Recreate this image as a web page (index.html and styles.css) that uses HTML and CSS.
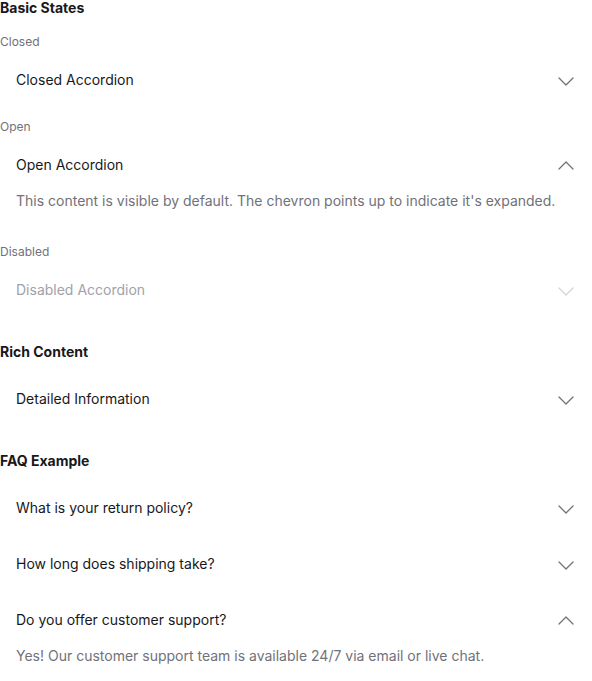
FILE: index.html
```html
<!DOCTYPE html>
<html lang="en">
<head>
<meta charset="utf-8">
<link rel="stylesheet" href="styles.css">
</head>
<body>
<main class="page">
  <section class="section">
    <h3 class="section-title">Basic States</h3>
    <div class="blocks">
      <div class="block">
        <div class="label">Closed</div>
        <div class="accordion">
          <button class="trigger"><span>Closed Accordion</span>
            <svg class="chev" viewBox="0 0 20 20"><path d="M3 8 L10 15 L17 8"/></svg></button>
        </div>
      </div>
      <div class="block">
        <div class="label">Open</div>
        <div class="accordion">
          <button class="trigger"><span>Open Accordion</span>
            <svg class="chev" viewBox="0 0 20 20"><path d="M3 14 L10 7 L17 14"/></svg></button>
          <div class="content">This content is visible by default. The chevron points up to indicate it's expanded.</div>
        </div>
      </div>
      <div class="block">
        <div class="label">Disabled</div>
        <div class="accordion disabled">
          <button class="trigger"><span>Disabled Accordion</span>
            <svg class="chev" viewBox="0 0 20 20"><path d="M3 8 L10 15 L17 8"/></svg></button>
        </div>
      </div>
    </div>
  </section>

  <section class="section">
    <h3 class="section-title">Rich Content</h3>
    <div class="accordion">
      <button class="trigger"><span>Detailed Information</span>
        <svg class="chev" viewBox="0 0 20 20"><path d="M3 8 L10 15 L17 8"/></svg></button>
    </div>
  </section>

  <section class="section">
    <h3 class="section-title">FAQ Example</h3>
    <div class="faq">
      <div class="accordion">
        <button class="trigger"><span>What is your return policy?</span>
          <svg class="chev" viewBox="0 0 20 20"><path d="M3 8 L10 15 L17 8"/></svg></button>
      </div>
      <div class="accordion">
        <button class="trigger"><span>How long does shipping take?</span>
          <svg class="chev" viewBox="0 0 20 20"><path d="M3 8 L10 15 L17 8"/></svg></button>
      </div>
      <div class="accordion">
        <button class="trigger"><span>Do you offer customer support?</span>
          <svg class="chev" viewBox="0 0 20 20"><path d="M3 14 L10 7 L17 14"/></svg></button>
        <div class="content">Yes! Our customer support team is available 24/7 via email or live chat.</div>
      </div>
    </div>
  </section>
</main>
</body>
</html>
```

FILE: styles.css
```css
* { box-sizing: border-box; }
html, body { margin: 0; padding: 0; background: #ffffff; }
body {
  font-family: Inter, "Noto Sans", sans-serif;
  color: #18181b;
  width: 592px;
}
.page {
  display: flex;
  flex-direction: column;
  gap: 30px;
}
.section {
  display: flex;
  flex-direction: column;
  gap: 15px;
}
.section-title {
  margin: 0;
  font-size: 14px;
  line-height: 16px;
  font-weight: 700;
  color: #18181b;
}
.blocks {
  display: flex;
  flex-direction: column;
  gap: 13px;
  margin-top: 1px;
}
.block {
  display: flex;
  flex-direction: column;
  gap: 4px;
}
.label {
  font-size: 12px;
  line-height: 20px;
  color: #71717a;
}
.faq {
  display: flex;
  flex-direction: column;
  gap: 8px;
}
.trigger {
  all: unset;
  box-sizing: border-box;
  width: 100%;
  height: 48px;
  padding: 0 16px;
  display: flex;
  align-items: center;
  justify-content: space-between;
  font-family: Inter, "Noto Sans", sans-serif;
  font-size: 14px;
  line-height: 20px;
  color: #18181b;
}
.chev {
  width: 20px;
  height: 20px;
  fill: none;
  stroke: #71717a;
  stroke-width: 1.3;
  stroke-linecap: round;
  stroke-linejoin: round;
}
.content {
  padding: 0 16px 16px;
  font-size: 14px;
  line-height: 24px;
  color: #71717a;
}
.disabled .trigger { color: #a1a1aa; }
.disabled .chev { stroke: #d4d4d8; }
```
